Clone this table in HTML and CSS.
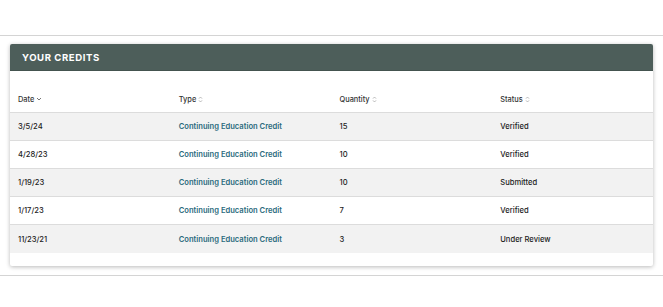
FILE: index.html
```html
<!DOCTYPE html>
<html>
<head>
<meta charset="utf-8">
<link rel="stylesheet" href="styles.css">
</head>
<body>
<div class="page">
  <div class="rule"></div>
  <section class="card">
    <header class="card-head">YOUR CREDITS</header>
    <div class="table">
      <div class="row head">
        <div class="cell">Date <svg class="sort" width="6" height="6" viewBox="0 0 6 6"><path d="M1 2 L3 4 L5 2" fill="none" stroke="#666" stroke-width="0.9"/></svg></div>
        <div class="cell">Type <svg class="sort" width="5" height="7" viewBox="0 0 5 7"><path d="M1 2.6 L2.5 1 L4 2.6 M1 4.4 L2.5 6 L4 4.4" fill="none" stroke="#aaa" stroke-width="0.8"/></svg></div>
        <div class="cell">Quantity <svg class="sort" width="5" height="7" viewBox="0 0 5 7"><path d="M1 2.6 L2.5 1 L4 2.6 M1 4.4 L2.5 6 L4 4.4" fill="none" stroke="#aaa" stroke-width="0.8"/></svg></div>
        <div class="cell">Status <svg class="sort" width="5" height="7" viewBox="0 0 5 7"><path d="M1 2.6 L2.5 1 L4 2.6 M1 4.4 L2.5 6 L4 4.4" fill="none" stroke="#aaa" stroke-width="0.8"/></svg></div>
      </div>
      <div class="row shade">
        <div class="cell">3/5/24</div><div class="cell link">Continuing Education Credit</div><div class="cell">15</div><div class="cell">Verified</div>
      </div>
      <div class="row">
        <div class="cell">4/28/23</div><div class="cell link">Continuing Education Credit</div><div class="cell">10</div><div class="cell">Verified</div>
      </div>
      <div class="row shade">
        <div class="cell">1/19/23</div><div class="cell link">Continuing Education Credit</div><div class="cell">10</div><div class="cell">Submitted</div>
      </div>
      <div class="row">
        <div class="cell">1/17/23</div><div class="cell link">Continuing Education Credit</div><div class="cell">7</div><div class="cell">Verified</div>
      </div>
      <div class="row shade last">
        <div class="cell">11/23/21</div><div class="cell link">Continuing Education Credit</div><div class="cell">3</div><div class="cell">Under Review</div>
      </div>
    </div>
  </section>
  <div class="rule bottom"></div>
</div>
</body>
</html>
```

FILE: styles.css
```css
* { box-sizing: border-box; }
html, body { margin: 0; padding: 0; background: #fff; }
body { font-family: Inter, "Open Sans", "Liberation Sans", sans-serif; color: #222; }
.page { padding-top: 35px; }
.rule { height: 1px; background: #d4d4d4; }
.rule.bottom { margin-top: 9px; }
.card {
  margin: 8px 10px 0 10px;
  background: #fff;
  box-shadow: 0 1px 4px rgba(0,0,0,0.28);
  border-radius: 2px;
  padding-bottom: 13px;
}
.card-head {
  height: 27px;
  background: #4d5e5a;
  color: #fff;
  font-size: 9.6px;
  font-weight: 700;
  letter-spacing: 0.55px;
  display: flex;
  align-items: center;
  padding-left: 12px;
  border-radius: 2px 2px 0 0;
  border-bottom: 1px solid #44534f;
}
.table { padding-top: 13px; }
.row {
  display: grid;
  grid-template-columns: repeat(4, 1fr);
  height: 28px;
  align-items: center;
  border-bottom: 1px solid #dcdcdc;
  font-size: 7.6px;
  font-weight: 500;
}
.row.head { height: 29px; font-size: 7.4px; color: #333; padding-top: 2px; }
.row.last { border-bottom: none; }
.row.shade { background: #f2f2f2; }
.cell { padding-left: 8px; display: flex; align-items: center; gap: 2px; white-space: nowrap; }
.cell.link { color: #2b6b7d; font-weight: 600; }
.sort { display: block; }
```
